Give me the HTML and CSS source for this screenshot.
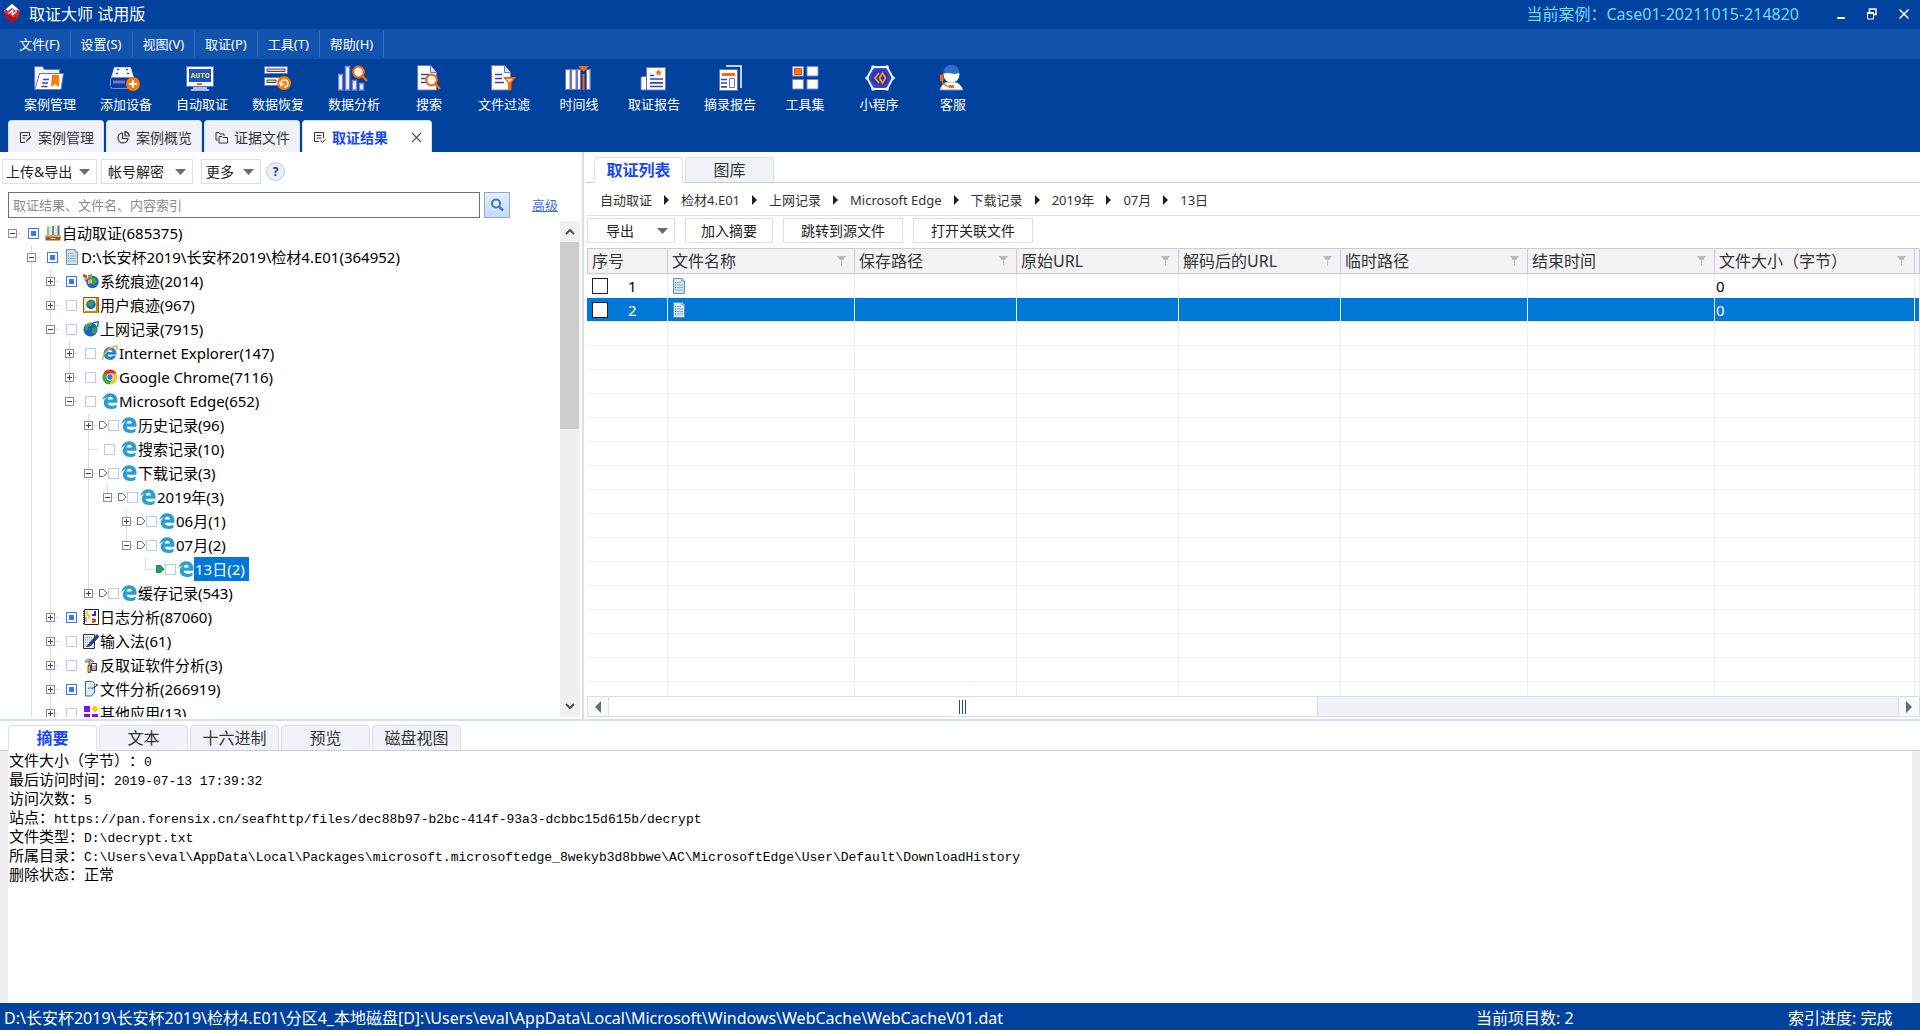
FILE: index.html
```html
<!DOCTYPE html>
<html lang="zh-CN">
<head>
<meta charset="utf-8">
<title>取证大师 试用版</title>
<link rel="stylesheet" href="styles.css">
</head>
<body>
<svg class="defs" aria-hidden="true">
  <symbol id="edge" viewBox="0 0 16 16"><path d="M.3 7.600C1 2.800 4.200.2 8.300.2c4.700 0 7.200 3.300 7.200 7.500v2.100H5.700c.1 2 1.900 3 4.100 3 1.800 0 3.300-.5 4.700-1.300v3.300c-1.500.8-3.300 1.200-5.500 1.200-4.400 0-7.200-2.500-7.200-6.200 0-2.400 1.200-4.400 3.200-5.500-2 .4-3.700 1.500-4.700 3.300zM5.700 6.500h5.100c0-1.800-1-2.700-2.500-2.700s-2.400 1-2.600 2.700z" fill="#2aa0cf"/></symbol>
  <symbol id="doc" viewBox="0 0 16 16"><path d="M2.500.5h8.500l2.500 2.500v12.500h-11z" fill="#cfe6f4" stroke="#6f8ea3"/><path d="M11 .5v2.500h2.500" fill="#fff" stroke="#6f8ea3"/><path d="M6 4.500h4M6 7h6M6 9.500h6M6 12h6" stroke="#8fb3c8"/><path d="M4 4.500h1M4 9.500h1" stroke="#3da05a"/><path d="M4 7h1M4 12h1" stroke="#4b72c4"/></symbol>
  <symbol id="books" viewBox="0 0 16 16"><path d="M2 1.500h2.500v9H2z" fill="#a9ada4"/><path d="M4.500.5h2v10h-2z" fill="#e4e7d8"/><path d="M7 1h2v9.500H7z" fill="#4d9788"/><path d="M9.500 1l2-.5 1 10h-2.500z" fill="#e0e2dd"/><path d="M12.500.5h2v10h-2z" fill="#4f7563"/><path d="M.5 10.500h15v5H.5z" fill="#a35423"/><path d="M.5 10h15v2H.5z" fill="#d9a06a"/><path d="M5.500 13.500h5" stroke="#f1c797"/></symbol>
  <symbol id="globe" viewBox="0 0 16 16"><circle cx="7.500" cy="8.500" r="7" fill="#1c62c0"/><path d="M2 5c2-3 5-3.500 7-3l-1 3-3 1-1 4-2-1z" fill="#44a84b"/><path d="M9 7l4-1 1 4-3 4-2-3z" fill="#3b9a44"/><path d="M3 3.500c2-2 4-2 5-1.700" stroke="#a8dcff" fill="none"/><path d="M10 2l5.500-1.500L14.500 6" fill="none" stroke="#2c78c8" stroke-width="1.500"/></symbol>
  <symbol id="system" viewBox="0 0 16 16"><circle cx="9.500" cy="9" r="6.200" fill="#2266c4"/><path d="M8 5l4 0 2 4-4 3-3-3z" fill="#43a349"/><path d="M0 1l4 1 0 4-4-2z" fill="#e4482b"/><path d="M5 2l4-1v4L5 6z" fill="#66b53c"/><path d="M1 5.500l3 1.500v3L2 8z" fill="#3d7fd9"/><path d="M5 7l4-1v4l-4 1z" fill="#f5bd2c"/></symbol>
  <symbol id="user" viewBox="0 0 16 16"><path d="M.5.500h15v15H.5z" fill="#f5e6a6" stroke="#8a6312"/><path d="M3 2.500h10v11H3z" fill="#fff"/><circle cx="8" cy="7.500" r="4.700" fill="#1f5fb9"/><path d="M5 5l4-1.500 2 3-3 4-3-2z" fill="#3ca04b"/><path d="M14 1v14H2" fill="none" stroke="#bd8926" stroke-width="2"/></symbol>
  <symbol id="ie" viewBox="0 0 16 16"><path d="M1.500 8.500A6.500 6.500 0 0 1 14.500 8.500v1.300H5.700c.3 2 3.200 2.600 4.700 1h3.800A6.600 6.600 0 0 1 1.500 8.500zM5.700 7h4.800C10 4.300 6.200 4.300 5.700 7z" fill="#2387d8"/><path d="M1 15C-1 11 8 1 15 1c1 1-.5 3-1 4" fill="none" stroke="#e9b52f" stroke-width="1.500"/></symbol>
  <symbol id="chrome" viewBox="0 0 16 16"><circle cx="8" cy="8" r="7.500" fill="#f4c724"/><path d="M8 8L1.500 4.200A7.500 7.500 0 0 1 14.600 4.500H8z" fill="#d8382c"/><path d="M8 8L1.500 4.200A7.500 7.500 0 0 0 7.200 15.500L11 9.700z" fill="#3fa548"/><circle cx="8" cy="8" r="3.500" fill="#fff"/><circle cx="8" cy="8" r="2.700" fill="#3879d9"/></symbol>
  <symbol id="log" viewBox="0 0 16 16"><path d="M1.500.5h14v15h-14z" fill="#fff" stroke="#222"/><path d="M1 2v13" stroke="#333" stroke-width="2" stroke-dasharray="1 1"/><path d="M4 2v4h2v4" fill="none" stroke="#efd826" stroke-width="2"/><path d="M12 2v5M9 6h2" stroke="#2433d8" stroke-width="2"/><path d="M9 10.500h3v2h-2v1.500" fill="none" stroke="#c02222" stroke-width="1.500"/><path d="M3 8v5" stroke="#e3a4a4" stroke-width="2"/></symbol>
  <symbol id="ime" viewBox="0 0 16 16"><path d="M.5 1.500h11v14H.5z" fill="#eceff4" stroke="#333"/><path d="M2 4.500h8M2 7h7M2 9.500h5M2 12h4" stroke="#8a93a3" stroke-dasharray="1 1"/><path d="M5 12L14 1.500l2 2L7.500 13z" fill="#1c3fae" stroke="#0b1b5c" stroke-width=".7"/><path d="M2.500 14l2.500-2 1.800 1.400z" fill="#111"/></symbol>
  <symbol id="anti" viewBox="0 0 16 16"><path d="M2 5c1-4 7-4 9 0H8.500L7 3 5 5z" fill="#c4c4be" stroke="#555" stroke-width=".7"/><path d="M5.500 4h2v5h-2z" fill="#777"/><path d="M5 8.500h2.500v7H5z" fill="#e6bb3c" stroke="#222" stroke-width=".7"/><path d="M8.500 6.500h5v7h-5z" fill="#fff" stroke="#333"/><path d="M10 9v4" stroke="#d22d6b"/><path d="M12 8v5" stroke="#3757c7"/></symbol>
  <symbol id="file" viewBox="0 0 16 16"><path d="M2.500.5h7l2 2v9l-3 3.500h-6z" fill="#dcedfb" stroke="#2b6fb3"/><path d="M5 8c2-3 4 2 9-4" fill="none" stroke="#222"/><path d="M5.500 7h3" stroke="#e2b72a" stroke-width="2"/><path d="M13 3l2 1.500" stroke="#c03a2b" stroke-width="1.500"/></symbol>
  <symbol id="apps" viewBox="0 0 16 16"><path d="M1 1h6v6H1zM1 9h6v6H1zM9 9h6v6H9z" fill="#8a0cf2"/><path d="M12 .3L15.700 4 12 7.700 8.300 4z" fill="#fbcb09"/></symbol>
  <symbol id="flag" viewBox="0 0 9 8"><path d="M.5.500h4L8 4 4.500 7.500h-4z" fill="#fff" stroke="#6b6b6b"/></symbol>
  <symbol id="flag-on" viewBox="0 0 9 8"><path d="M.5.500h4L8 4 4.500 7.500h-4z" fill="#1fa65a" stroke="#188a4a"/></symbol>
  <symbol id="down" viewBox="0 0 11 6"><path d="M0 0h11L5.500 6z" fill="#6b6b6b"/></symbol>
  <symbol id="next" viewBox="0 0 5 10"><path d="M0 0l5 5-5 5z" fill="#222"/></symbol>
  <symbol id="filter" viewBox="0 0 9 10"><path d="M0 0h9L6 4H3z" fill="#b9b9b9"/><path d="M4.500 3v7" stroke="#c4c4c4"/></symbol>
</svg>

<header class="top">
  <div class="titlebar">
    <svg class="logo" viewBox="0 0 18 20"><path d="M9 0l8 7-3 3-5-4-5 4-3-3z" fill="#fff"/><path d="M1 7l8-5 8 5-2 7-6 5-6-5z" fill="#d8262c"/><path d="M9 0l6 5-2 2-4-3-4 3-2-2z" fill="#fff"/><path d="M5.500 9.500l4-3v4l4-3" fill="none" stroke="#fff" stroke-width="1.500"/><path d="M9 12v7l-6-5-1-4zM9 13v6l6-5" fill="#a8141b"/></svg>
    <h1>取证大师 试用版</h1>
    <span class="case">当前案例：Case01-20211015-214820</span>
    <div class="winbtns">
      <button aria-label="最小化"><svg width="8" height="12" viewBox="0 0 8 12"><path d="M0 9h8v2H0z" fill="#fff"/></svg></button>
      <button aria-label="还原"><svg width="10" height="12" viewBox="0 0 10 12"><path d="M2.500 4V1h6.500v5.500H7" fill="none" stroke="#fff" stroke-width="1.500"/><path d="M.5 5h6v6h-6z" fill="none" stroke="#fff"/><path d="M0 5h7" stroke="#fff" stroke-width="2"/></svg></button>
      <button aria-label="关闭"><svg width="10" height="12" viewBox="0 0 10 12"><path d="M.5 1.500l9 9M9.500 1.500l-9 9" stroke="#fff" stroke-width="1.500"/></svg></button>
    </div>
  </div>
  <nav class="menubar">
    <button>文件(F)</button><button>设置(S)</button><button>视图(V)</button><button>取证(P)</button><button>工具(T)</button><button>帮助(H)</button>
  </nav>
  <div class="toolbar">
    <button><svg viewBox="0 0 32 26"><path d="M.5 24.500v-23h8l2 3h15v8" fill="#f3f3fb" stroke="#6a73cf"/><path d="M5.500 8.500h24l-2.500 16H1z" fill="#fff" stroke="#6a73cf"/><path d="M9 14.500h6M8 18h6M7.500 21.500h6" stroke="#3542c8" stroke-width="1.700"/><path d="M18 10h7v12l-4-3-4 3z" fill="#ff7a00"/></svg>案例管理</button>
    <button><svg viewBox="0 0 32 26"><path d="M4.500 2.500h16l3 10h-22z" fill="#fff" stroke="#c9cdf0"/><path d="M7 4.500h2M16 4.500h2M6 8.500h2M17 8.500h2" stroke="#3542c8" stroke-width="1.700"/><rect x=".5" y="12.500" width="24" height="11" rx="2" fill="#0c3f9d" stroke="#7f87d8"/><path d="M3 17h12" stroke="#6a73cf" stroke-width="3"/><circle cx="23" cy="19" r="7" fill="#ff7a00"/><path d="M19 19h8M23 15v8" stroke="#fff" stroke-width="2"/></svg>添加设备</button>
    <button><svg viewBox="0 0 32 26"><path d="M.5 1.500h27v20H.5z" fill="#fff" stroke="#6a73cf"/><path d="M3 4h22v13H3z" fill="#1450d8"/><text x="14" y="13" text-anchor="middle" class="auto">AUTO</text><path d="M11 19h5" stroke="#ff6a00" stroke-width="2"/><path d="M7 23h14M5 25h18" stroke="#e9ebfa" stroke-width="1.300"/></svg>自动取证</button>
    <button><svg viewBox="0 0 32 26"><path d="M2.500 1.500h23v7h-23zM2.500 12.500h23v8h-23z" fill="#fff" stroke="#6a73cf"/><path d="M5 4h18v2.500H5zM5 15h9v2.500H5z" fill="#e8e820" stroke="#3542c8"/><circle cx="22" cy="18" r="7" fill="#ff7a00"/><path d="M19 20c-1-6 6-7 7-2 0 2-1 4-4 4M17.500 17.500l1.500 3 3-2" fill="none" stroke="#fff" stroke-width="1.600"/></svg>数据恢复</button>
    <button><svg viewBox="0 0 32 26"><path d="M.5 9.500h4v15.500h-4zM7.500 1.500h4v23.500h-4zM14.500 15.500h4v9.500h-4zM21.500 18.500h4v6.500h-4z" fill="#fff" stroke="#7b84dc" stroke-width="1.500"/><circle cx="20.500" cy="7" r="5.300" fill="#fff" stroke="#ff6a00" stroke-width="2.200"/><path d="M24.500 11l4.500 5" stroke="#ff6a00" stroke-width="2.500"/></svg>数据分析</button>
    <button><svg viewBox="0 0 32 26"><path d="M4.500.5h13l6 7v17.500h-19z" fill="#fff" stroke="#6a73cf"/><path d="M17.500.5v7h6" fill="#dfe1f6" stroke="#6a73cf"/><path d="M8 9.500h8M8 13.500h5M8 17.500h5" stroke="#3542c8" stroke-width="1.700"/><circle cx="18.500" cy="15" r="5.300" fill="#fff" stroke="#ff6a00" stroke-width="2.200"/><path d="M22.500 19l4.500 5" stroke="#ff6a00" stroke-width="2.500"/></svg>搜索</button>
    <button><svg viewBox="0 0 32 26"><path d="M3.500.5h13l6 7v17.500h-19z" fill="#fff" stroke="#6a73cf"/><path d="M16.500.5v7h6" fill="#dfe1f6" stroke="#6a73cf"/><path d="M7 9.500h7M7 13.500h7M7 17.500h9" stroke="#3542c8" stroke-width="1.700"/><path d="M15 12h13l-4.500 6v7h-3.500v-7z" fill="#ff6a00"/><path d="M18.500 14h6l-3 3z" fill="#fff"/></svg>文件过滤</button>
    <button><svg viewBox="0 0 32 26"><path d="M2 4h26v21H2z" fill="#6a73cf"/><path d="M3 5h3.500v19H3zM9 5h3.500v19H9zM15 5h2v19h-2zM24 5h2.500v19H24z" fill="#fff"/><path d="M18 5h5v20h-5z" fill="#0a3a97"/><path d="M19.500 9h2v16h-2zM15 1h11l-5.500 5.500z" fill="#ff6a00"/></svg>时间线</button>
    <button><svg viewBox="0 0 32 26"><path d="M8 11.500H5c-1.500 0-2 .5-2 2V25h5" fill="#fff" stroke="#6a73cf"/><path d="M8.500 2.500h19v22.500h-19z" fill="#fff" stroke="#6a73cf"/><path d="M12 10.500h4M12 14h13M12 17.800h13M12 21.500h13" stroke="#3542c8" stroke-width="1.700"/><path d="M20.500 4l1 2.500h2.500l-2 1.700.8 2.600-2.300-1.600-2.300 1.600.8-2.600-2-1.700h2.500z" fill="#ff6a00"/></svg>取证报告</button>
    <button><svg viewBox="0 0 32 26"><path d="M12 1h15v22" fill="none" stroke="#fff" stroke-width="1.500"/><path d="M5.500 4.500h18v21h-18z" fill="#fff" stroke="#6a73cf"/><path d="M8 8h13v3H8z" fill="#ff6a00"/><path d="M7 14.500h6M7 18h6M7 21.800h6" stroke="#3542c8" stroke-width="1.700"/><path d="M15.500 13.500h5v9h-5z" fill="#fff" stroke="#6a73cf"/></svg>摘录报告</button>
    <button><svg viewBox="0 0 32 26"><path d="M3.500 1.500h11v9.500h-11zM18 1.500h11v9.500h-11zM3.500 14.500h11v9.500h-11zM18 14.500h11v9.500h-11z" fill="#fff" stroke="#7b84dc"/><path d="M5.500 3.500h7v6h-7z" fill="#ff7a00" stroke="#e04a00"/></svg>工具集</button>
    <button><svg viewBox="0 0 32 26"><path d="M10 2h14l6 11-6 11H10L4 13z" fill="#3944d0" stroke="#fff" stroke-width="1.800"/><path d="M10 2h.1M24 2h.1M30 13h.1M24 24h.1M10 24h.1M4 13h.1" stroke="#d9f4ff" stroke-width="3.500" stroke-linecap="round"/><circle cx="17" cy="13" r="8.500" fill="#2c35be"/><path d="M16 8l-4 5 4 5M19.500 8l-3 5 3 5 3-5z" fill="none" stroke="#f5a300" stroke-width="1.700"/></svg>小程序</button>
    <button><svg viewBox="0 0 32 26"><path d="M3 25c1-5 4-7 7-8h8c4 1 7 4 8 8z" fill="#fff" stroke="#7b84dc"/><circle cx="14.500" cy="9.500" r="8" fill="#fff"/><path d="M6 9c0-12 17-12 16-1-7 3-8-2-16 1z" fill="#2f6fca"/><path d="M3 9.500h3.500v6.500H3z" fill="#ff6a00"/><path d="M5 16c1 4 4 5 8 5.500" fill="none" stroke="#ff6a00" stroke-width="1.300"/><path d="M12 20h5v3h-5z" fill="#ff6a00"/></svg>客服</button>
  </div>
  <div class="apptabs" role="tablist">
    <button role="tab"><svg viewBox="0 0 13 13"><path d="M6 11.500H1.500v-10h9V5M3.500 4.500h5M3.500 7h3" fill="none" stroke="#333"/><path d="M7 11l.5-2 4-4 1 1-4 4z" fill="#333"/></svg>案例管理</button>
    <button role="tab"><svg viewBox="0 0 13 13"><path d="M5.500 2A5 5 0 1 0 11 7.500H5.500zM8 .7V5h4.300A5 5 0 0 0 8 .7z" fill="none" stroke="#333" stroke-width="1.200"/></svg>案例概览</button>
    <button role="tab"><svg viewBox="0 0 13 13"><path d="M3 9H1V1.500h3L5 3h4v2M4 12V5.500h3l1 1h4.500V12z" fill="none" stroke="#333"/></svg>证据文件</button>
    <button role="tab" aria-selected="true" class="on"><svg viewBox="0 0 13 13"><path d="M6 10.500H1.500v-9h9V7M3.500 4.500h5M3.500 7h5M7.500 9.500l2 2 3-3.500" fill="none" stroke="#333"/></svg>取证结果<svg class="x" viewBox="0 0 11 11"><path d="M1 1l9 9M10 1l-9 9" stroke="#555" stroke-width="1.200"/></svg></button>
  </div>
</header>

<main class="work">
  <aside class="side">
    <div class="actions">
      <button class="drop w95">上传&amp;导出<svg><use href="#down"/></svg></button>
      <button class="drop w92">帐号解密<svg><use href="#down"/></svg></button>
      <button class="drop w60">更多<svg><use href="#down"/></svg></button>
      <button class="help">?</button>
    </div>
    <div class="search">
      <input type="text" placeholder="取证结果、文件名、内容索引" aria-label="搜索">
      <button aria-label="搜索"><svg viewBox="0 0 14 14"><circle cx="6" cy="5.500" r="4" fill="#dff0ff" stroke="#4a76b8" stroke-width="2"/><path d="M9 8.500l4 4" stroke="#4a76b8" stroke-width="2.500"/></svg></button>
      <a href="#">高级</a>
    </div>
    <div class="treebox">
      <ul class="tree">
        <li><div class="row"><button class="exp" aria-label="折叠"></button><span class="chk"><input type="checkbox" class="part" id="t0"></span><svg><use href="#books"/></svg><label for="t0">自动取证(685375)</label></div>
        <ul>
          <li class="more"><div class="row"><button class="exp" aria-label="折叠"></button><span class="chk"><input type="checkbox" class="part" id="t1"></span><svg><use href="#doc"/></svg><label for="t1">D:\长安杯2019\长安杯2019\检材4.E01(364952)</label></div>
          <ul>
            <li><div class="row"><button class="exp plus" aria-label="展开"></button><span class="chk"><input type="checkbox" class="part" id="t2"></span><svg><use href="#system"/></svg><label for="t2">系统痕迹(2014)</label></div></li>
            <li><div class="row"><button class="exp plus" aria-label="展开"></button><span class="chk"><input type="checkbox" id="t3"></span><svg><use href="#user"/></svg><label for="t3">用户痕迹(967)</label></div></li>
            <li><div class="row"><button class="exp" aria-label="折叠"></button><span class="chk"><input type="checkbox" id="t4"></span><svg><use href="#globe"/></svg><label for="t4">上网记录(7915)</label></div>
            <ul>
              <li><div class="row"><button class="exp plus" aria-label="展开"></button><span class="chk"><input type="checkbox" id="t5"></span><svg><use href="#ie"/></svg><label for="t5">Internet Explorer(147)</label></div></li>
              <li><div class="row"><button class="exp plus" aria-label="展开"></button><span class="chk"><input type="checkbox" id="t6"></span><svg><use href="#chrome"/></svg><label for="t6">Google Chrome(7116)</label></div></li>
              <li><div class="row"><button class="exp" aria-label="折叠"></button><span class="chk"><input type="checkbox" id="t7"></span><svg><use href="#edge"/></svg><label for="t7">Microsoft Edge(652)</label></div>
              <ul>
                <li><div class="row"><button class="exp plus" aria-label="展开"></button><span class="chk flagged"><svg><use href="#flag"/></svg><input type="checkbox" id="t8"></span><svg><use href="#edge"/></svg><label for="t8">历史记录(96)</label></div></li>
                <li><div class="row"><span class="leaf"></span><span class="chk"><input type="checkbox" id="t9"></span><svg><use href="#edge"/></svg><label for="t9">搜索记录(10)</label></div></li>
                <li><div class="row"><button class="exp" aria-label="折叠"></button><span class="chk flagged"><svg><use href="#flag"/></svg><input type="checkbox" id="t10"></span><svg><use href="#edge"/></svg><label for="t10">下载记录(3)</label></div>
                <ul>
                  <li><div class="row"><button class="exp" aria-label="折叠"></button><span class="chk flagged"><svg><use href="#flag"/></svg><input type="checkbox" id="t11"></span><svg><use href="#edge"/></svg><label for="t11">2019年(3)</label></div>
                  <ul>
                    <li><div class="row"><button class="exp plus" aria-label="展开"></button><span class="chk flagged"><svg><use href="#flag"/></svg><input type="checkbox" id="t12"></span><svg><use href="#edge"/></svg><label for="t12">06月(1)</label></div></li>
                    <li><div class="row"><button class="exp" aria-label="折叠"></button><span class="chk flagged"><svg><use href="#flag"/></svg><input type="checkbox" id="t13"></span><svg><use href="#edge"/></svg><label for="t13">07月(2)</label></div>
                    <ul>
                      <li><div class="row"><span class="leaf"></span><span class="chk flagged"><svg><use href="#flag-on"/></svg><input type="checkbox" id="t14"></span><svg><use href="#edge"/></svg><label for="t14" class="sel">13日(2)</label></div></li>
                    </ul></li>
                  </ul></li>
                </ul></li>
                <li><div class="row"><button class="exp plus" aria-label="展开"></button><span class="chk flagged"><svg><use href="#flag"/></svg><input type="checkbox" id="t15"></span><svg><use href="#edge"/></svg><label for="t15">缓存记录(543)</label></div></li>
              </ul></li>
            </ul></li>
            <li><div class="row"><button class="exp plus" aria-label="展开"></button><span class="chk"><input type="checkbox" class="part" id="t16"></span><svg><use href="#log"/></svg><label for="t16">日志分析(87060)</label></div></li>
            <li><div class="row"><button class="exp plus" aria-label="展开"></button><span class="chk"><input type="checkbox" id="t17"></span><svg><use href="#ime"/></svg><label for="t17">输入法(61)</label></div></li>
            <li><div class="row"><button class="exp plus" aria-label="展开"></button><span class="chk"><input type="checkbox" id="t18"></span><svg><use href="#anti"/></svg><label for="t18">反取证软件分析(3)</label></div></li>
            <li><div class="row"><button class="exp plus" aria-label="展开"></button><span class="chk"><input type="checkbox" class="part" id="t19"></span><svg><use href="#file"/></svg><label for="t19">文件分析(266919)</label></div></li>
            <li class="more"><div class="row"><button class="exp plus" aria-label="展开"></button><span class="chk"><input type="checkbox" id="t20"></span><svg><use href="#apps"/></svg><label for="t20">其他应用(13)</label></div></li>
          </ul></li>
        </ul></li>
      </ul>
      <div class="vscroll">
        <svg viewBox="0 0 10 6"><path d="M1 5l4-4 4 4" fill="none" stroke="#505050" stroke-width="2"/></svg>
        <div class="vthumb"></div>
        <svg class="end" viewBox="0 0 10 6"><path d="M1 1l4 4 4-4" fill="none" stroke="#505050" stroke-width="2"/></svg>
      </div>
    </div>
  </aside>

  <section class="results">
    <div class="tabs" role="tablist"><button role="tab" class="on" aria-selected="true">取证列表</button><button role="tab">图库</button></div>
    <nav class="crumbs"><span>自动取证</span><svg><use href="#next"/></svg><span>检材4.E01</span><svg><use href="#next"/></svg><span>上网记录</span><svg><use href="#next"/></svg><span>Microsoft Edge</span><svg><use href="#next"/></svg><span>下载记录</span><svg><use href="#next"/></svg><span>2019年</span><svg><use href="#next"/></svg><span>07月</span><svg><use href="#next"/></svg><span>13日</span></nav>
    <div class="gridbtns">
      <button class="drop export">导出<svg><use href="#down"/></svg></button>
      <button class="w88">加入摘要</button><button class="w120">跳转到源文件</button><button class="w120">打开关联文件</button>
    </div>
    <div class="gridbox">
      <table class="grid">
        <colgroup><col class="c80"><col class="c187"><col class="c162"><col class="c162"><col class="c162"><col class="c187"><col class="c187"><col class="c200"><col></colgroup>
        <thead><tr>
          <th>序号</th>
          <th><div>文件名称<svg><use href="#filter"/></svg></div></th>
          <th><div>保存路径<svg><use href="#filter"/></svg></div></th>
          <th><div>原始URL<svg><use href="#filter"/></svg></div></th>
          <th><div>解码后的URL<svg><use href="#filter"/></svg></div></th>
          <th><div>临时路径<svg><use href="#filter"/></svg></div></th>
          <th><div>结束时间<svg><use href="#filter"/></svg></div></th>
          <th><div>文件大小（字节）<svg><use href="#filter"/></svg></div></th>
          <th></th>
        </tr></thead>
        <tbody>
          <tr><td><label class="num"><input type="checkbox">1</label></td><td><svg class="ficon"><use href="#doc"/></svg></td><td></td><td></td><td></td><td></td><td></td><td>0</td><td></td></tr>
          <tr class="sel"><td><label class="num"><input type="checkbox">2</label></td><td><svg class="ficon"><use href="#doc"/></svg></td><td></td><td></td><td></td><td></td><td></td><td>0</td><td></td></tr>
          <tr><td></td><td></td><td></td><td></td><td></td><td></td><td></td><td></td><td></td></tr>
          <tr><td></td><td></td><td></td><td></td><td></td><td></td><td></td><td></td><td></td></tr>
          <tr><td></td><td></td><td></td><td></td><td></td><td></td><td></td><td></td><td></td></tr>
          <tr><td></td><td></td><td></td><td></td><td></td><td></td><td></td><td></td><td></td></tr>
          <tr><td></td><td></td><td></td><td></td><td></td><td></td><td></td><td></td><td></td></tr>
          <tr><td></td><td></td><td></td><td></td><td></td><td></td><td></td><td></td><td></td></tr>
          <tr><td></td><td></td><td></td><td></td><td></td><td></td><td></td><td></td><td></td></tr>
          <tr><td></td><td></td><td></td><td></td><td></td><td></td><td></td><td></td><td></td></tr>
          <tr><td></td><td></td><td></td><td></td><td></td><td></td><td></td><td></td><td></td></tr>
          <tr><td></td><td></td><td></td><td></td><td></td><td></td><td></td><td></td><td></td></tr>
          <tr><td></td><td></td><td></td><td></td><td></td><td></td><td></td><td></td><td></td></tr>
          <tr><td></td><td></td><td></td><td></td><td></td><td></td><td></td><td></td><td></td></tr>
          <tr><td></td><td></td><td></td><td></td><td></td><td></td><td></td><td></td><td></td></tr>
          <tr><td></td><td></td><td></td><td></td><td></td><td></td><td></td><td></td><td></td></tr>
          <tr><td></td><td></td><td></td><td></td><td></td><td></td><td></td><td></td><td></td></tr>
          <tr><td></td><td></td><td></td><td></td><td></td><td></td><td></td><td></td><td></td></tr>
        </tbody>
      </table>
    </div>
    <div class="hscroll">
      <button aria-label="向左"><svg viewBox="0 0 6 12"><path d="M6 0v12L0 6z" fill="#6b6b6b"/></svg></button>
      <div class="htrack"><div class="hthumb"><i></i><i></i><i></i></div></div>
      <button aria-label="向右"><svg viewBox="0 0 6 12"><path d="M0 0v12l6-6z" fill="#6b6b6b"/></svg></button>
    </div>
  </section>
</main>

<section class="detail">
  <div class="tabs" role="tablist"><button role="tab" class="on" aria-selected="true">摘要</button><button role="tab">文本</button><button role="tab">十六进制</button><button role="tab">预览</button><button role="tab">磁盘视图</button></div>
  <div class="summary">
    <p>文件大小（字节）：<span>0</span></p>
    <p>最后访问时间：<span>2019-07-13 17:39:32</span></p>
    <p>访问次数：<span>5</span></p>
    <p>站点：<span>https://pan.forensix.cn/seafhttp/files/dec88b97-b2bc-414f-93a3-dcbbc15d615b/decrypt</span></p>
    <p>文件类型：<span>D:\decrypt.txt</span></p>
    <p>所属目录：<span>C:\Users\eval\AppData\Local\Packages\microsoft.microsoftedge_8wekyb3d8bbwe\AC\MicrosoftEdge\User\Default\DownloadHistory</span></p>
    <p>删除状态：正常</p>
  </div>
</section>

<footer class="status"><span>D:\长安杯2019\长安杯2019\检材4.E01\分区4_本地磁盘[D]:\Users\eval\AppData\Local\Microsoft\Windows\WebCache\WebCacheV01.dat</span><span>当前项目数: 2</span><span>索引进度: 完成</span></footer>
</body>
</html>
```
FILE: styles.css
```css
* { box-sizing: border-box; }
:root {
  --navy: #00429d;
  --line: #d5dff0;
  --rule: #c9cada;
  --sel: #0078d7;
  --active: #1a48f0;
}
body {
  margin: 0;
  height: 100vh;
  display: grid;
  grid-template-rows: auto 2fr 1fr auto;
  grid-template-columns: minmax(0, 1fr);
  overflow: hidden;
  background: #fff;
  color: #222;
  font: 14px/18px "Noto Sans", "Noto Sans CJK SC", sans-serif;
  text-spacing-trim: space-all;
}
button {
  margin: 0;
  padding: 0;
  border: 0;
  background: none;
  color: inherit;
  font: inherit;
  white-space: nowrap;
}
input { margin: 0; }
.defs { position: absolute; width: 0; height: 0; }

/* header */
.top { background: var(--navy); color: #fff; }
.titlebar { display: flex; align-items: center; height: 29px; padding: 0 11px 2px 3px; font-size: 16px; }
.logo { width: 18px; height: 20px; margin-right: 8px; }
h1 { margin: 0; font-size: 16px; font-weight: 400; }
.case { margin-left: auto; color: #6cdcff; }
.winbtns { display: flex; gap: 22px; margin-left: 38px; }
.winbtns svg { display: block; }
.menubar { display: flex; align-items: center; height: 30px; padding-left: 9px; background: #1153ad; font-size: 13px; }
.menubar button { height: 26px; padding: 0 10px; border-right: 1px solid #2f6cc0; }
.toolbar { display: flex; height: 61px; padding: 6px 0 0 12px; font-size: 13px; }
.toolbar button { display: flex; flex-direction: column; align-items: center; gap: 4px; min-width: 74px; padding: 0 12px; }
.toolbar svg { width: 32px; height: 26px; }
.auto { font: bold 8px "Liberation Mono", monospace; fill: #f2ee1c; }
.apptabs { display: flex; gap: 2px; height: 32px; padding-left: 8px; color: #333; }
.apptabs button { display: flex; align-items: center; gap: 6px; padding: 2px 9px 0 10px; border: 1px solid var(--line); border-bottom: 0; border-radius: 4px 4px 0 0; background: #eff3f9; }
.apptabs svg { width: 13px; height: 13px; }
.apptabs .on { background: #fff; color: var(--active); font-weight: 700; }
.apptabs .x { width: 11px; height: 11px; margin-left: 17px; }

/* workspace */
.work { display: grid; grid-template-columns: 584px minmax(0, 1fr); min-height: 0; }
.side { display: flex; flex-direction: column; min-height: 0; padding: 7px 2px 2px 0; border-right: 2px solid var(--line); }
.actions { display: flex; gap: 4px; padding-left: 2px; }
.drop { display: flex; align-items: center; justify-content: space-between; padding: 0 6px 0 3px; }
.actions .drop, .gridbtns button { height: 25px; border: 1px solid var(--line); background: #fff; }
.drop svg { width: 11px; height: 6px; }
.w95 { width: 95px; }
.actions .w92 { width: 92px; padding-left: 6px; }
.actions .w60 { width: 60px; margin-left: 4px; padding-left: 4px; }
.help { width: 19px; height: 19px; margin: 3px 0 0 1px; border: 1px solid #bccbe2; border-radius: 50%; background: #e9eff8; color: #11459a; font-size: 12px; font-weight: 700; line-height: 17px; }
.search { display: flex; align-items: center; padding: 8px 0 3px 8px; }
.search input { width: 472px; height: 26px; padding: 0 4px; border: 1px solid #6f6f6f; font: 13px "Noto Sans", "Noto Sans CJK SC", sans-serif; }
.search input::placeholder { color: #8a8a8a; opacity: 1; }
.search button { display: grid; place-items: center; width: 26px; height: 26px; margin: 0 22px 0 4px; border: 1px solid #8aa9d6; background: linear-gradient(#e3eeff, #c3daff); }
.search svg { width: 14px; height: 14px; }
.search a { color: #3b6fd8; font-size: 13px; }
.treebox { display: flex; flex: 1; min-height: 0; }
.tree { flex: 1; padding-left: 8px; overflow: hidden; color: #000; font-size: 15px; }
.tree, .tree ul { margin: 0; list-style: none; }
.tree ul { padding-left: 19px; }
.tree ul li { background: linear-gradient(#dcdcdc, #dcdcdc) 4px 0 / 1px 100% no-repeat; }
.tree ul li:last-child:not(.more) { background-size: 1px 12px; }
.row { display: grid; grid-template-columns: 9px 28px 16px auto; justify-content: start; align-items: center; height: 24px; background: linear-gradient(#dcdcdc, #dcdcdc) 4px 12px / 9px 1px no-repeat; }
.row > svg { width: 16px; height: 16px; }
.exp { width: 9px; height: 9px; border: 1px solid #8d8d8d; background: linear-gradient(#24408e, #24408e) center / 5px 1px no-repeat #fff; }
.plus { background: linear-gradient(#24408e, #24408e) center / 5px 1px no-repeat, linear-gradient(#24408e, #24408e) center / 1px 5px no-repeat #fff; }
.chk { display: flex; align-items: center; padding-left: 11px; }
.chk.flagged { padding-left: 6px; }
.chk svg { width: 9px; height: 8px; }
.chk input { appearance: none; width: 11px; height: 11px; border: 1px solid #b5cdfb; background: #fff; }
.chk .part { border-color: #3d76f5; background: linear-gradient(#3d76f5, #3d76f5) center / 5px 5px no-repeat #fff; }
.row label { padding: 0 4px 0 1px; line-height: 24px; white-space: nowrap; }
.row .sel { background: var(--sel); color: #fff; }
.vscroll { display: flex; flex-direction: column; align-items: center; width: 20px; padding: 8px 0; background: #f0f0f0; }
.vscroll svg { width: 10px; height: 6px; flex: none; }
.vthumb { width: 20px; height: 39%; margin-top: 7px; border-right: 1px solid #f0f0f0; background: #cdcdcd; }
.end { margin-top: auto; }

/* tab strips */
.tabs { display: flex; gap: 2px; height: 26px; padding-left: 8px; background: linear-gradient(var(--rule), var(--rule)) 0 100% / 100% 1px no-repeat; color: #333; font-size: 16px; }
.tabs button { width: 89px; padding-bottom: 1px; border: 1px solid var(--line); border-bottom-color: var(--rule); border-radius: 4px 4px 0 0; background: #eff3f9; }
.tabs .on { border-bottom-color: #fff; background: #fff; color: var(--active); font-weight: 700; }

/* results pane */
.results { display: flex; flex-direction: column; min-width: 0; min-height: 0; padding: 5px 0 2px 2px; }
.crumbs { display: flex; align-items: center; gap: 12px; height: 33px; padding: 2px 0 0 14px; border-bottom: 1px solid var(--line); color: #333; font-size: 13px; }
.crumbs svg { width: 5px; height: 10px; }
.gridbtns { display: flex; gap: 10px; padding: 2px 0 5px 1px; }
.gridbtns .export { width: 88px; padding: 0 6px 0 18px; }
.w88 { width: 88px; }
.w120 { width: 120px; }
.gridbox { flex: 1; min-height: 0; overflow: hidden; padding-left: 1px; }
.grid { width: 100%; border-spacing: 0; table-layout: fixed; color: #000; font-size: 15px; line-height: 20px; }
.c80 { width: 81px; }
.c162 { width: 162px; }
.c187 { width: 187px; }
.c200 { width: 200px; }
.grid th { height: 26px; padding: 0 8px 0 4px; border: solid var(--rule); border-width: 1px 1px 1px 0; background: #f3f3f5; color: #333; font-size: 16px; font-weight: 400; text-align: left; white-space: nowrap; }
.grid th:first-child { border-left-width: 1px; }
.grid th div { display: flex; align-items: center; justify-content: space-between; }
.grid th svg { width: 9px; height: 10px; }
.grid td { height: 24px; padding: 0 1px; border: solid #eee; border-width: 0 1px 1px 0; }
.grid .sel td { background: var(--sel); color: #fff; }
.num { display: flex; align-items: center; gap: 20px; padding-left: 4px; }
.num input { appearance: none; width: 16px; height: 16px; border: 1px solid #222; background: #fff; }
.ficon { display: block; width: 16px; height: 16px; margin-left: 2px; }
.hscroll { display: flex; height: 21px; margin-left: 1px; border: 1px solid var(--line); background: #eef1f8; }
.hscroll button { display: grid; place-items: center; width: 21px; background: #f8f9fc; border: solid var(--line); border-width: 0 1px 0 0; }
.hscroll button:last-child { border-width: 0 0 0 1px; }
.hscroll svg { width: 6px; height: 12px; }
.htrack { flex: 1; display: flex; }
.hthumb { display: flex; align-items: center; justify-content: center; gap: 2px; width: 55%; border-right: 1px solid var(--line); background: #fff; }
.hthumb i { width: 1px; height: 14px; background: #14509f; }

/* detail pane */
.detail { display: flex; flex-direction: column; min-height: 0; padding-top: 4px; border-top: 2px solid var(--line); }
.summary { flex: 1; padding: 0 1px; border: solid #f0f0f0; border-width: 0 8px; color: #000; font: 15px/18px "Noto Sans CJK SC", sans-serif; }
.summary p { margin: 0; height: 19px; white-space: nowrap; }
.summary span { font: 13px/18px "Liberation Mono", monospace; }

.status { display: grid; grid-template-columns: minmax(0, 1fr) 312px 132px; align-items: center; height: 27px; padding: 3px 0 0 4px; background: var(--navy); color: #fff; font-size: 16px; white-space: nowrap; }
```
